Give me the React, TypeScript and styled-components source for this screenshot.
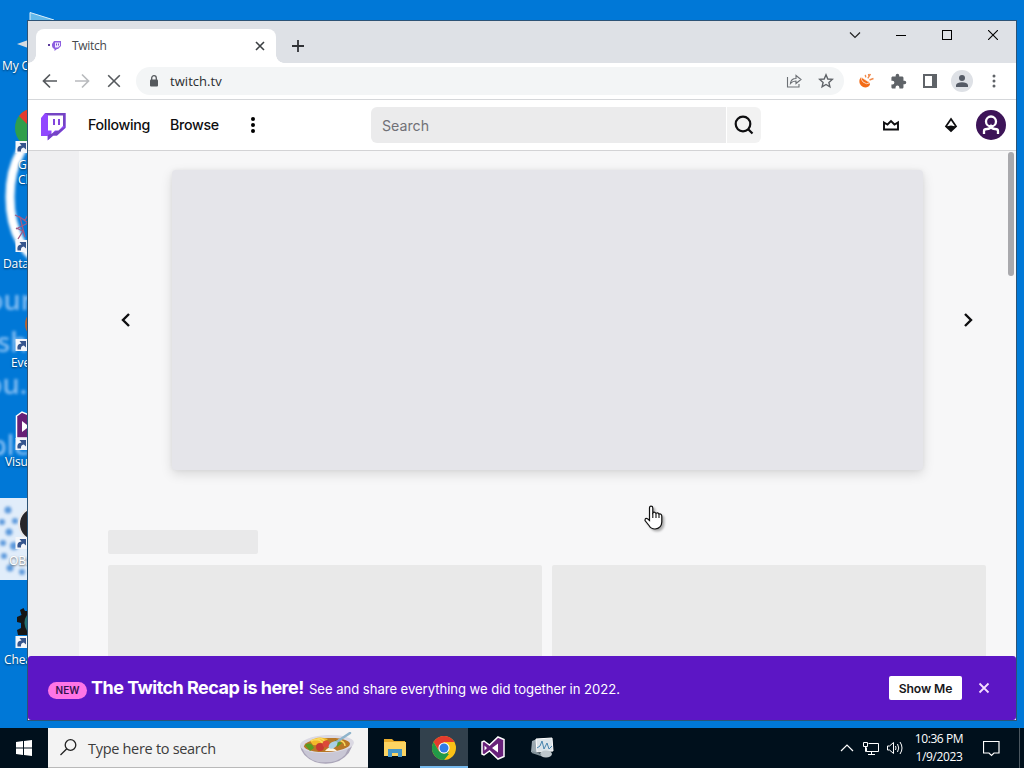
import React from 'react';
import styled, { createGlobalStyle, css } from 'styled-components';

const GlobalStyle = createGlobalStyle`
  * { box-sizing: border-box; }
  html, body { margin: 0; padding: 0; }
  body { width: 1024px; height: 768px; overflow: hidden; }
  button { border: 0; padding: 0; margin: 0; background: none; font: inherit; color: inherit; }
  svg { display: block; flex: none; }
`;

const segoe = css`font-family: 'Open Sans', 'Noto Sans', sans-serif;`;
const roobert = css`font-family: Inter, 'Liberation Sans', sans-serif;`;

const Desktop = styled.div`
  position: relative;
  display: flex;
  flex-direction: column;
  width: 1024px;
  height: 768px;
  overflow: hidden;
  background: #0078d7;
  ${segoe}
`;

const Wallpaper = styled.svg`
  position: absolute;
  left: 0;
  top: 0;
`;

const Workspace = styled.div`
  position: relative;
  flex: 1;
  padding-top: 9px;
`;

const Shortcut = styled.div<{ $indent: number }>`
  position: relative;
  height: 99px;
  width: 76px;
  color: #fff;
  font-size: 12px;
  line-height: 15px;
  white-space: pre;
  text-shadow: 0 1px 2px rgba(0, 0, 0, 0.6);

  svg { overflow: visible; }
  span { display: block; padding: 1px 0 0 ${props => props.$indent}px; letter-spacing: -0.1px; }
`;

const Window = styled.div`
  position: absolute;
  left: 27px;
  top: 20px;
  width: 990px;
  height: 701px;
  display: flex;
  flex-direction: column;
  border: 1px solid #2c5376;
  background: #fff;
`;

const TitleBar = styled.div`
  display: flex;
  height: 42px;
  padding-left: 8px;
  background: #dee1e6;
`;

const Tab = styled.div`
  position: relative;
  display: flex;
  align-items: center;
  width: 240px;
  height: 34px;
  margin-top: 8px;
  padding: 0 8px 0 12px;
  border-radius: 8px 8px 0 0;
  background: #fff;
  color: #45494d;
  font-size: 12px;

  &::before, &::after {
    content: '';
    position: absolute;
    bottom: 0;
    width: 8px;
    height: 8px;
  }
  &::before { left: -8px; background: radial-gradient(circle at 0 0, transparent 7.5px, #fff 8px); }
  &::after { right: -8px; background: radial-gradient(circle at 100% 0, transparent 7.5px, #fff 8px); }
`;

const TabTitle = styled.span`
  flex: 1;
  margin-left: 10px;
  padding-bottom: 2px;
  letter-spacing: -0.3px;
`;

const NewTab = styled.button`
  display: flex;
  align-items: center;
  justify-content: center;
  width: 28px;
  margin: 8px 0 0 8px;
`;

const WindowControls = styled.div`
  display: flex;
  height: 28px;
  margin-left: auto;
`;

const WindowButton = styled.button`
  display: flex;
  align-items: center;
  justify-content: center;
  width: 46px;
`;

const Toolbar = styled.div`
  display: flex;
  align-items: center;
  height: 37px;
  padding: 0 6px;
  border-bottom: 1px solid #d5d7da;
`;

const Slot = styled.button`
  display: flex;
  align-items: center;
  justify-content: center;
  width: 32px;
  height: 28px;
`;

const AddressBar = styled.div`
  display: flex;
  align-items: center;
  width: 708px;
  height: 28px;
  margin: 0 6px;
  padding: 0 2px 0 11px;
  border-radius: 14px;
  background: #f3f5f6;
  color: #2b2e31;
  font-size: 13px;
`;

const Url = styled.span`
  flex: 1;
  margin-left: 9px;
  letter-spacing: 0.05px;
`;

const ProfileDot = styled.span`
  display: flex;
  align-items: center;
  justify-content: center;
  width: 22px;
  height: 22px;
  border-radius: 50%;
  background: #dee1e6;
`;

const SiteNav = styled.div`
  display: grid;
  grid-template-columns: 343px 390px 1fr;
  align-items: center;
  height: 51px;
  border-bottom: 1px solid #d3d3d5;
  ${roobert}
`;

const NavLeft = styled.div`
  display: flex;
  align-items: center;
  height: 50px;
  padding-left: 13px;
`;

const NavLink = styled.span<{ $left: number; $width: number }>`
  width: ${props => props.$width}px;
  margin-left: ${props => props.$left}px;
  padding-bottom: 2px;
  color: #0e0e10;
  font-size: 14.2px;
  font-weight: 500;
  letter-spacing: -0.28px;
  white-space: nowrap;
`;

const SearchBox = styled.div`
  display: flex;
  gap: 1px;
  height: 36px;
`;

const SearchField = styled.div`
  display: flex;
  align-items: center;
  width: 355px;
  padding-left: 11px;
  border-radius: 6px 0 0 6px;
  background: #ebebec;
  color: #717177;
  font-size: 14.2px;
`;

const SearchButton = styled.button`
  display: flex;
  align-items: center;
  justify-content: center;
  width: 34px;
  border-radius: 0 6px 6px 0;
  background: #f2f2f2;
`;

const NavRight = styled.div`
  display: flex;
  align-items: center;
  justify-content: flex-end;
  height: 50px;
  padding-right: 10px;
`;

const Page = styled.div`
  display: flex;
  height: 505px;
  overflow: hidden;
  background: #f7f7f8;
`;

const SideNav = styled.div`
  width: 51px;
  background: #efeff1;
`;

const Main = styled.div`
  position: relative;
  flex: 1;
  padding-top: 18px;
`;

const Carousel = styled.div`
  display: flex;
  align-items: center;
  justify-content: space-between;
  height: 302px;
  padding: 0 33px 0 32px;
`;

const Arrow = styled.button`
  display: flex;
  align-items: center;
  justify-content: center;
  width: 30px;
  height: 30px;
`;

const Stage = styled.div`
  width: 751px;
  height: 300px;
  border-radius: 4px;
  background: #e5e5ea;
  box-shadow: 0 4px 12px rgba(0, 0, 0, 0.13), 0 0 4px rgba(0, 0, 0, 0.05);
`;

const SkeletonTitle = styled.div`
  width: 150px;
  height: 24px;
  margin: 59px 0 11px 29px;
  border-radius: 2px;
  background: #e9e9ea;
`;

const SkeletonRow = styled.div`
  display: grid;
  grid-template-columns: 434px 434px;
  gap: 10px;
  padding-left: 29px;
`;

const SkeletonCard = styled.div`
  height: 100px;
  border-radius: 2px 2px 0 0;
  background: #e9e9e9;
`;

const ScrollThumb = styled.div`
  position: absolute;
  top: 1px;
  right: 2px;
  width: 6px;
  height: 124px;
  border-radius: 4px;
  background: #a9a9ad;
`;

const Banner = styled.div`
  display: flex;
  align-items: center;
  height: 64px;
  padding: 0 26px 0 20px;
  border-radius: 3px;
  background: #5c16c5;
  color: #fff;
  ${roobert}
`;

const BannerText = styled.div`
  display: flex;
  align-items: baseline;
  flex: 1;
  white-space: nowrap;
`;

const Pill = styled.span`
  display: inline-block;
  width: 39px;
  height: 17px;
  border-radius: 9px;
  background: #ff75e6;
  color: #33124f;
  font-size: 10px;
  font-weight: 600;
  line-height: 17px;
  text-align: center;
`;

const Headline = styled.span`
  width: 213px;
  margin: 0 5px 0 4px;
  font-size: 18px;
  font-weight: 700;
  letter-spacing: -0.52px;
`;

const Blurb = styled.span`
  font-size: 13.1px;
  letter-spacing: -0.04px;
`;

const ShowMe = styled.button`
  width: 73px;
  height: 24px;
  margin-right: 16px;
  border-radius: 2px;
  background: #fff;
  color: #18181b;
  font-size: 12.2px;
  font-weight: 600;
  letter-spacing: -0.1px;
`;

const Taskbar = styled.div`
  display: flex;
  align-items: center;
  height: 40px;
  background: #00101c;
`;

const StartButton = styled.button`
  display: flex;
  align-items: center;
  justify-content: center;
  width: 48px;
  height: 40px;
`;

const TaskSearch = styled.div`
  display: flex;
  align-items: center;
  width: 320px;
  height: 40px;
  margin-right: 3px;
  padding: 0 12px 0 12px;
  background: #f3f3f3;
  border-bottom: 1px solid #b9b9b9;
  color: #3c3c3c;
  font-size: 14.5px;
`;

const Placeholder = styled.span`
  flex: 1;
  margin-left: 11px;
  padding-top: 2px;
  letter-spacing: -0.3px;
`;

const TaskButton = styled.button<{ $active?: boolean }>`
  display: flex;
  align-items: center;
  justify-content: center;
  width: 48px;
  height: 40px;
  margin-right: 1px;
  background: ${props => props.$active ? '#32414d' : 'transparent'};
  border-bottom: 2px solid ${props => props.$active ? '#76b9ed' : 'transparent'};
  padding-top: 2px;
`;

const Tray = styled.div`
  display: flex;
  align-items: center;
  height: 40px;
  margin-left: auto;
`;

const TrayButton = styled.button`
  display: flex;
  align-items: center;
  justify-content: center;
  width: 24px;
  height: 40px;
`;

const Clock = styled.div`
  width: 64px;
  color: #fff;
  font-size: 12px;
  line-height: 18px;
  text-align: center;
  letter-spacing: -0.4px;
`;

const ActionCenter = styled.button`
  display: flex;
  align-items: center;
  justify-content: center;
  width: 40px;
`;

const PeekEdge = styled.div`
  width: 5px;
  height: 40px;
  margin-left: 8px;
  border-left: 1px solid #4b5760;
`;

const Pointer = styled.svg`
  position: absolute;
  left: 644px;
  top: 505px;
  filter: drop-shadow(2px 2px 1px rgba(0, 0, 0, 0.3));
`;

const ShortcutArrow = () => (
  <g>
    <rect x="15.5" y="33" width="12" height="12" fill="#f4f6fa" />
    <path d="M17.500 43.500 Q16.500 37.500 21.500 37.500 L19.500 35 H26 V41.500 L23.800 39.500 Q20.500 40 21 43.500 Z" fill="#35558d" />
  </g>
);

const Cog = () => (
  <g>
    <path d="M40 8 H25 L23.500 5 L20 7 L21.500 12 L17 14 V19 L21 20 V25 L17 27 L18 32 H40 Z" fill="#151515" />
    <path d="M40 12 H27 Q22 19 27 28 H40 Z" fill="#237072" />
  </g>
);

const shortcuts: { label: string; indent: number; arrow: boolean; art: React.ReactNode }[] = [
  {
    label: 'My Computer', indent: 2, arrow: false,
    art: (
      <g>
        <path d="M30 3.500 L54 11 V30 H30 Z" fill="#64b9ea" stroke="#d9eefa" strokeWidth="1" />
        <path d="M17 35 L31 30 V40 Z" fill="#d6dbe0" />
      </g>
    ),
  },
  {
    label: 'Google\nChrome', indent: 18, arrow: true,
    art: (
      <g>
        <circle cx="35" cy="20" r="20" fill="#2f9e4b" />
        <path d="M19 8 A20 20 0 0 1 50 7 L33 22 Z" fill="#e33b2e" />
      </g>
    ),
  },
  {
    label: 'Database', indent: 3, arrow: true,
    art: <path d="M15 8 L25 13 L29 6 M16 22 L28 16 L20 10 L25 30 M16 21 L23 24 L18 32" fill="none" stroke="#a05c86" strokeWidth="1.300" />,
  },
  {
    label: 'Everything', indent: 11, arrow: true,
    art: <circle cx="40" cy="18" r="13" fill="none" stroke="#b5622f" strokeWidth="4" />,
  },
  {
    label: 'Visual Studio', indent: 5, arrow: true,
    art: (
      <g>
        <path d="M16.500 11 L22 7 L34 12 V33 H16.500 Z" fill="#672076" stroke="#fff" strokeWidth="1.500" />
        <path d="M22 16 L29 21.500 L22 27 Z" fill="#fff" />
      </g>
    ),
  },
  {
    label: 'OBS Studio', indent: 9, arrow: true,
    art: <circle cx="36" cy="20" r="17" fill="#27262a" stroke="#e8e8ea" strokeWidth="2" />,
  },
  { label: 'Cheat Engine', indent: 4, arrow: true, art: <Cog /> },
];

const WallpaperArt = () => (
  <Wallpaper width="60" height="728" viewBox="0 0 60 728">
    <defs>
      <filter id="soft" x="-30%" y="-30%" width="160%" height="160%">
        <feGaussianBlur stdDeviation="1.800" />
      </filter>
    </defs>
    <ellipse cx="45" cy="197" rx="35" ry="63" fill="none" stroke="#fff" strokeWidth="9" filter="url(#soft)" />
    <g filter="url(#soft)" fill="#bddcff" opacity="0.7" fontSize="27" fontFamily="Open Sans, sans-serif" fontWeight="600">
      <text x="-13" y="310">our</text>
      <text x="-3" y="352">sh</text>
      <text x="-14" y="394">ou.</text>
      <text x="-10" y="455">ple</text>
    </g>
    <rect x="-4" y="498" width="50" height="82" fill="#e1edfa" />
    <g filter="url(#soft)" fill="#5b99dc">
      <circle cx="8" cy="510" r="3.500" />
      <circle cx="2" cy="522" r="3" />
      <circle cx="15" cy="521" r="3" />
      <circle cx="9" cy="532" r="3.500" />
      <circle cx="3" cy="543" r="3" />
      <circle cx="14" cy="546" r="4" />
      <circle cx="4" cy="556" r="3" />
      <circle cx="10" cy="568" r="3.500" />
      <circle cx="22" cy="572" r="3" />
    </g>
  </Wallpaper>
);

const TwitchLogo = () => (
  <svg width="25" height="29" viewBox="0 0 25 29" style={{ marginTop: 2 }}>
    <path d="M4 1 H24.500 V16 L16 23.500 H12.500 L6.500 28.500 V24 H0 V6 Z" fill="#9147ff" />
    <path d="M4 1 H24.500 V15.500 L16 23.500 H12 L7 28 V23 L24 15 Z" fill="#7444c4" />
    <path d="M7 3.500 H22 V14 L17.500 18.500 H14 L10.500 22 V18.500 H7 Z" fill="#fff" />
    <path d="M13 7 V13 M18 7 V13" stroke="#8245dd" strokeWidth="2" />
  </svg>
);

const TabFavicon = () => (
  <svg width="14" height="12" viewBox="0 0 14 12">
    <rect x="0" y="4" width="2" height="2" fill="#5b3b9b" />
    <path d="M6 1 H13 V6 L10 9 H9 L6.500 11 V9 Q3.500 8 4 4 Z" fill="#8d5fe0" />
    <path d="M7 2.500 H12 V5.500 L10 7.500 H7 Z" fill="#efe8ff" />
    <path d="M8.500 3.500 V5.500 M10.500 3.500 V5.500" stroke="#7a4dd0" />
  </svg>
);

const VisualStudio = () => (
  <svg width="26" height="26" viewBox="0 0 26 26">
    <path d="M18 2 L24 4.500 V21.500 L18 24 L9.500 16 L4 20 L2 19 V7 L4 6 L9.500 10 Z" fill="#68217a" stroke="#fff" strokeWidth="1.500" />
    <path d="M18 8.500 V17.500 L12 13 Z M4.500 10.500 V15.500 L7 13 Z" fill="#fff" />
  </svg>
);

const ChromeIcon = () => (
  <svg width="24" height="24" viewBox="0 0 24 24">
    <circle cx="12" cy="12" r="12" fill="#fbc116" />
    <path d="M1.600 6 A12 12 0 0 1 22.400 6 H12 L7 15 Z" fill="#e33b2e" />
    <path d="M1.600 6 L6.800 15 Q9 18 12 18 H17 L12 24 A12 12 0 0 1 1.600 6 Z" fill="#229a48" />
    <path d="M12 24 L17.200 15 L12 18 L6.800 15 Z" fill="#229a48" />
    <circle cx="12" cy="12" r="5.600" fill="#fff" />
    <circle cx="12" cy="12" r="4.500" fill="#317be6" />
  </svg>
);

const NoodleBowl = () => (
  <svg width="58" height="34" viewBox="0 0 58 34" style={{ marginTop: 3 }}>
    <path d="M2 13 Q3 24 17 30 Q29 34 41 29 Q54 22 55 9 Z" fill="#aaa5b8" />
    <path d="M4 16 Q8 27 20 30 Q39 32 47 23 L52 13 Z" fill="#c9c7d5" />
    <ellipse cx="29" cy="12" rx="27" ry="9" fill="#dbd9e3" transform="rotate(-3 29 12)" />
    <ellipse cx="29" cy="13" rx="23" ry="7" fill="#b87726" transform="rotate(-3 29 13)" />
    <path d="M12 9 Q20 3 30 7 Q23 14 15 13 Z" fill="#f2ba2a" />
    <path d="M13 9 Q20 5 25 11 M18 8 Q24 4 28 11 M40 8 Q47 9 47 14" fill="none" stroke="#fbd95e" strokeWidth="1.500" />
    <path d="M7 13 Q13 9 16 16 L12 19 Z M37 8 L44 11 L39 15 Z" fill="#579c24" />
    <circle cx="22" cy="15" r="4" fill="#c83931" />
    <circle cx="28" cy="12" r="3.500" fill="#dc4a38" />
    <path d="M27 19 Q32 12 39 19 Z" fill="#fff4dc" />
    <path d="M34 13 L52 1" stroke="#8fb4cb" strokeWidth="2.500" strokeLinecap="round" />
    <ellipse cx="35" cy="13" rx="5" ry="3" fill="#a9d1e5" transform="rotate(-35 35 13)" />
  </svg>
);

const App: React.FC = () => (
  <>
    <GlobalStyle />
    <Desktop>
      <WallpaperArt />
      <Workspace>
        {shortcuts.map(item => (
          <Shortcut key={item.label} $indent={item.indent}>
            <svg width="60" height="48" viewBox="0 0 60 48">
              {item.art}
              {item.arrow && <ShortcutArrow />}
            </svg>
            <span>{item.label}</span>
          </Shortcut>
        ))}
        <Window>
          <TitleBar>
            <Tab>
              <TabFavicon />
              <TabTitle>Twitch</TabTitle>
              <svg width="16" height="16" viewBox="0 0 16 16">
                <path d="M4 4 L12 12 M12 4 L4 12" stroke="#3c4043" strokeWidth="1.600" />
              </svg>
            </Tab>
            <NewTab aria-label="New tab">
              <svg width="12" height="12" viewBox="0 0 12 12">
                <path d="M6 0 V12 M0 6 H12" stroke="#303236" strokeWidth="1.800" />
              </svg>
            </NewTab>
            <WindowControls>
              <WindowButton aria-label="Search tabs">
                <svg width="12" height="8" viewBox="0 0 12 8"><path d="M1 1.500 L6 6.500 L11 1.500" fill="none" stroke="#222" strokeWidth="1.200" /></svg>
              </WindowButton>
              <WindowButton aria-label="Minimize">
                <svg width="10" height="10" viewBox="0 0 10 10"><path d="M0 5.500 H10" stroke="#000" /></svg>
              </WindowButton>
              <WindowButton aria-label="Maximize">
                <svg width="10" height="10" viewBox="0 0 10 10"><rect x=".5" y=".5" width="9" height="9" fill="none" stroke="#000" /></svg>
              </WindowButton>
              <WindowButton aria-label="Close">
                <svg width="10" height="10" viewBox="0 0 10 10"><path d="M0 0 L10 10 M10 0 L0 10" stroke="#000" strokeWidth="1.100" /></svg>
              </WindowButton>
            </WindowControls>
          </TitleBar>

          <Toolbar>
            <Slot aria-label="Back">
              <svg width="16" height="16" viewBox="0 0 16 16"><path d="M15 8 H2 M8 1.500 L1.500 8 L8 14.500" fill="none" stroke="#55595d" strokeWidth="1.700" /></svg>
            </Slot>
            <Slot aria-label="Forward">
              <svg width="16" height="16" viewBox="0 0 16 16"><path d="M1 8 H14 M8 1.500 L14.500 8 L8 14.500" fill="none" stroke="#b9bbbe" strokeWidth="1.700" /></svg>
            </Slot>
            <Slot aria-label="Stop">
              <svg width="14" height="14" viewBox="0 0 14 14"><path d="M1.200 1.200 L12.800 12.800 M12.800 1.200 L1.200 12.800" stroke="#55595d" strokeWidth="1.600" /></svg>
            </Slot>
            <AddressBar>
              <svg width="14" height="14" viewBox="0 0 14 14">
                <rect x="3" y="5.500" width="8" height="7" rx="1" fill="#55595d" />
                <path d="M4.700 6 V4 A2.300 2.300 0 0 1 9.300 4 V6" fill="none" stroke="#55595d" strokeWidth="1.300" />
              </svg>
              <Url>twitch.tv</Url>
              <Slot aria-label="Share">
                <svg width="16" height="16" viewBox="0 0 16 16" fill="none" stroke="#6c7075" strokeWidth="1.100">
                  <path d="M1.500 4 V14 H13 V11" />
                  <path d="M4.500 10.500 Q5 5.500 10 5.500 V2.500 L15 6.500 L10 10.500 V8 Q6.500 8 4.500 10.500 Z" />
                </svg>
              </Slot>
              <Slot aria-label="Bookmark">
                <svg width="16" height="16" viewBox="0 0 16 16">
                  <path d="M8 1.800 L9.800 6 L14.300 6.400 L10.900 9.400 L11.900 13.800 L8 11.500 L4.100 13.800 L5.100 9.400 L1.700 6.400 L6.200 6 Z" fill="none" stroke="#5f6368" strokeWidth="1.400" />
                </svg>
              </Slot>
            </AddressBar>
            <Slot aria-label="Extension">
              <svg width="16" height="16" viewBox="0 0 16 16">
                <path d="M2.500 4.500 Q0 9 3 12.500 Q6.500 16 10.500 13.500 Q12.500 12 12 9.500 Z" fill="#f36b16" />
                <path d="M3 4 L12 9.800 Q8.500 12 5 9 Q3 6.500 3 4 Z" fill="#f36b16" stroke="#fff2e8" strokeWidth=".8" />
                <path d="M7.800 4.300 L7.300 1.800 M9.800 5.300 L12.500 1 M11.500 7 L15.500 5.500 M11 3 L10.500 1" stroke="#f08a4c" strokeWidth="1.400" />
              </svg>
            </Slot>
            <Slot aria-label="Extensions">
              <svg width="17" height="17" viewBox="0 0 24 24">
                <path d="M20.500 11H19V7c0-1.100-.9-2-2-2h-4V3.500a2.500 2.500 0 0 0-5 0V5H4c-1.100 0-2 .9-2 2v3.800h1.500a2.700 2.700 0 0 1 0 5.400H2V20c0 1.100.9 2 2 2h3.800v-1.500a2.700 2.700 0 0 1 5.400 0V22H17c1.100 0 2-.9 2-2v-4h1.500a2.500 2.500 0 0 0 0-5z" fill="#5f6368" />
              </svg>
            </Slot>
            <Slot aria-label="Side panel">
              <svg width="14" height="14" viewBox="0 0 14 14"><rect x="1" y="1" width="12" height="12" fill="#fff" stroke="#5f6368" strokeWidth="2" /><rect x="9" y="1" width="5" height="12" fill="#5f6368" /></svg>
            </Slot>
            <Slot aria-label="Profile">
              <ProfileDot>
                <svg width="12" height="12" viewBox="0 0 12 12" fill="#555b66"><circle cx="6" cy="3" r="3" /><path d="M0 12 V10 Q1 7.300 6 7.300 Q11 7.300 12 10 V12 Z" /></svg>
              </ProfileDot>
            </Slot>
            <Slot aria-label="Menu">
              <svg width="4" height="14" viewBox="0 0 4 14" fill="#5f6368"><circle cx="2" cy="2" r="1.500" /><circle cx="2" cy="7" r="1.500" /><circle cx="2" cy="12" r="1.500" /></svg>
            </Slot>
          </Toolbar>

          <SiteNav>
            <NavLeft>
              <TwitchLogo />
              <NavLink $left={22} $width={62}>Following</NavLink>
              <NavLink $left={20} $width={48}>Browse</NavLink>
              <svg width="20" height="18" viewBox="0 0 20 18" style={{ marginLeft: 25 }}><circle cx="10" cy="3" r="2" /><circle cx="10" cy="9" r="2" /><circle cx="10" cy="15" r="2" /></svg>
            </NavLeft>
            <SearchBox>
              <SearchField>Search</SearchField>
              <SearchButton aria-label="Search">
                <svg width="20" height="20" viewBox="0 0 20 20" fill="none" stroke="#0e0e10" strokeWidth="2.200"><circle cx="9" cy="9" r="7.300" /><path d="M14 14 L18.500 18.500" /></svg>
              </SearchButton>
            </SearchBox>
            <NavRight>
              <Slot aria-label="Prime offers">
                <svg width="18" height="14" viewBox="0 0 18 14"><path d="M2 4.500 L5.500 6.500 L9 3 L12.500 6.500 L16 4.500 V11.500 H2 Z" fill="none" stroke="#0e0e10" strokeWidth="1.900" /></svg>
              </Slot>
              <Slot aria-label="Bits" style={{ marginLeft: 28 }}>
                <svg width="14" height="16" viewBox="0 0 14 16"><path d="M7 2 L12 9.300 L7 14 L2 9.300 Z" fill="none" stroke="#0e0e10" strokeWidth="1.800" /><path d="M2 9.500 L7 8.500 L12 9.500 L7 14 Z" fill="#0e0e10" /></svg>
              </Slot>
              <svg width="30" height="30" viewBox="0 0 30 30" style={{ marginLeft: 9 }}>
                <circle cx="15" cy="15" r="15" fill="#3d1458" />
                <circle cx="15" cy="11.500" r="5" fill="none" stroke="#fff" strokeWidth="2.300" />
                <path d="M8 24 V21 Q8 19 11 19 Q14 19 15 16.500 Q16 19 19 19 Q22 19 22 21 V24" fill="none" stroke="#fff" strokeWidth="2.300" />
              </svg>
            </NavRight>
          </SiteNav>

          <Page>
            <SideNav />
            <Main>
              <Carousel>
                <Arrow aria-label="Previous"><svg width="10" height="14" viewBox="0 0 10 14"><path d="M8 1 L2 7 L8 13" fill="none" stroke="#0e0e10" strokeWidth="2.400" /></svg></Arrow>
                <Stage />
                <Arrow aria-label="Next"><svg width="10" height="14" viewBox="0 0 10 14"><path d="M2 1 L8 7 L2 13" fill="none" stroke="#0e0e10" strokeWidth="2.400" /></svg></Arrow>
              </Carousel>
              <SkeletonTitle />
              <SkeletonRow>
                <SkeletonCard />
                <SkeletonCard />
              </SkeletonRow>
              <ScrollThumb />
            </Main>
          </Page>

          <Banner>
            <BannerText>
              <Pill>NEW</Pill>
              <Headline>The Twitch Recap is here!</Headline>
              <Blurb>See and share everything we did together in 2022.</Blurb>
            </BannerText>
            <ShowMe>Show Me</ShowMe>
            <svg width="12" height="12" viewBox="0 0 12 12"><path d="M1.500 1.500 L10.500 10.500 M10.500 1.500 L1.500 10.500" stroke="#f5dcff" strokeWidth="1.800" /></svg>
          </Banner>
        </Window>
      </Workspace>

      <Taskbar>
        <StartButton aria-label="Start">
          <svg width="16" height="16" viewBox="0 0 16 16" fill="#fff"><path d="M0 2 L7 1 V7.500 H0 Z M8 .9 L16 0 V7.500 H8 Z M0 8.500 H7 V15 L0 14 Z M8 8.500 H16 V16 L8 15.100 Z" /></svg>
        </StartButton>
        <TaskSearch>
          <svg width="17" height="17" viewBox="0 0 17 17" fill="none" stroke="#222" strokeWidth="1.300"><circle cx="10.500" cy="6" r="5.300" /><path d="M6.800 9.800 L.5 16" /></svg>
          <Placeholder>Type here to search</Placeholder>
          <NoodleBowl />
        </TaskSearch>
        <TaskButton aria-label="File Explorer">
          <svg width="22" height="20" viewBox="0 0 22 20">
            <path d="M0 1 H8 L10 3 H21 V18 H0 Z" fill="#e9ad2d" />
            <path d="M0 4 H22 V18 H0 Z" fill="#fcd462" />
            <path d="M4 19 V11 H18 V19 H14 V15 H8 V19 Z" fill="#4596c7" />
          </svg>
        </TaskButton>
        <TaskButton $active aria-label="Chrome"><ChromeIcon /></TaskButton>
        <TaskButton aria-label="Visual Studio"><VisualStudio /></TaskButton>
        <TaskButton aria-label="Resource Monitor">
          <svg width="24" height="22" viewBox="0 0 24 22">
            <path d="M2 4 L7 2 V17 L1 15 Z" fill="#9ba9b1" />
            <path d="M6 2 L22 1 L23 14 L7 15 Z" fill="#dbe4e9" stroke="#fff" />
            <path d="M7 11 L10 9 L12 4 L14 12 L17 6 L19 12 L22 9" fill="none" stroke="#4785ae" />
            <ellipse cx="16" cy="17" rx="6" ry="3.500" fill="#bec7cc" />
            <path d="M2 15 L11 18" stroke="#84939b" strokeWidth="2" />
          </svg>
        </TaskButton>
        <Tray>
          <TrayButton aria-label="Show hidden icons">
            <svg width="14" height="8" viewBox="0 0 14 8"><path d="M1 7 L7 1 L13 7" fill="none" stroke="#fff" strokeWidth="1.200" /></svg>
          </TrayButton>
          <TrayButton aria-label="Network">
            <svg width="17" height="15" viewBox="0 0 17 15" fill="none" stroke="#fff">
              <path d="M5.500 2.500 H15.500 V10.500 H3.500 V6.500 M8.500 10.500 V13.500 M5 13.500 H12" />
              <path d="M.5 1.500 H4.500 V5.500 H.5 Z M2.500 5.500 V10.500 H3.500" />
            </svg>
          </TrayButton>
          <TrayButton aria-label="Volume">
            <svg width="18" height="14" viewBox="0 0 18 14" fill="none" stroke="#fff">
              <path d="M1.500 5 H3.500 L7.500 1.500 V12.500 L3.500 9 H1.500 Z" />
              <path d="M9.500 5 Q10.500 7 9.500 9 M11.500 3 Q14 7 11.500 11 M14 1 Q18 7 14 13" />
            </svg>
          </TrayButton>
          <Clock>10:36 PM<br />1/9/2023</Clock>
          <ActionCenter aria-label="Notifications">
            <svg width="17" height="17" viewBox="0 0 17 17"><path d="M.5 1.500 H16 V13 H11 L8.500 15.500 L6 13 H.5 Z" fill="none" stroke="#fff" strokeWidth="1.200" /></svg>
          </ActionCenter>
          <PeekEdge />
        </Tray>
      </Taskbar>

      <Pointer width="20" height="26" viewBox="0 0 20 26">
        <path d="M5.500 15.500 V3 Q5.500 1.200 7 1.200 Q8.800 1.200 8.800 3 V8 Q10 6.200 12 8.400 Q13.800 7 15 9 Q17.800 8.500 17.800 11.500 V17 Q17.500 23.500 11 24 Q7 24 5 20.500 L1 15.500 Q1 12.500 3.500 13.800 Z" fill="#fff" stroke="#111" strokeWidth="1.200" />
        <path d="M8.800 8 V13 M12 8.500 V13 M15 9 V13" stroke="#111" strokeWidth="1.100" />
      </Pointer>
    </Desktop>
  </>
);

export default App;
